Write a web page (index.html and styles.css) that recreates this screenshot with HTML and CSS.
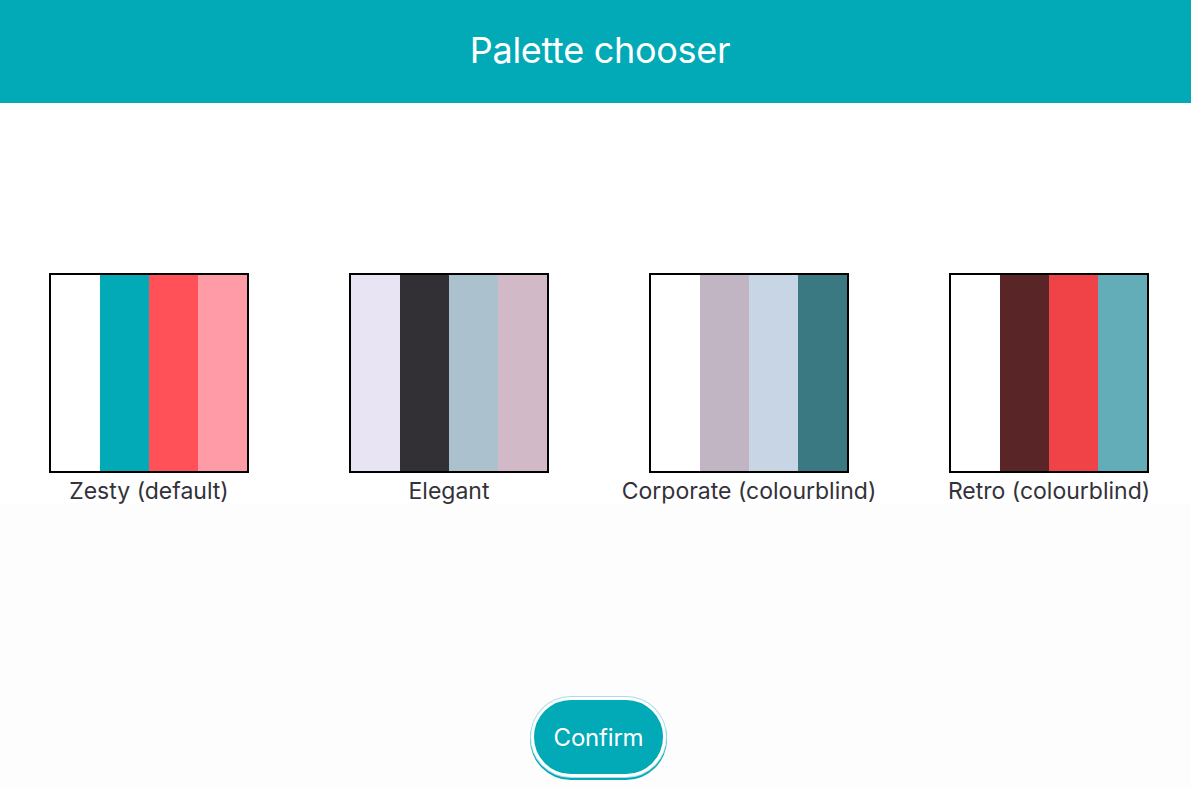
FILE: index.html
```html
<!DOCTYPE html>
<html>
<head>
<meta charset="utf-8">
<link rel="stylesheet" href="styles.css">
</head>
<body>
<header class="topbar"><h1 class="title">Palette chooser</h1></header>
<main class="main">
  <section class="palettes">
    <div class="palette">
      <div class="swatch">
        <span class="stripe" style="background:#ffffff"></span>
        <span class="stripe" style="background:#02a9b6"></span>
        <span class="stripe" style="background:#ff5157"></span>
        <span class="stripe" style="background:#ff9ba6"></span>
      </div>
      <div class="label">Zesty (default)</div>
    </div>
    <div class="palette">
      <div class="swatch">
        <span class="stripe" style="background:#e8e4f4"></span>
        <span class="stripe" style="background:#333035"></span>
        <span class="stripe" style="background:#abc1cd"></span>
        <span class="stripe" style="background:#d1b9c8"></span>
      </div>
      <div class="label">Elegant</div>
    </div>
    <div class="palette">
      <div class="swatch">
        <span class="stripe" style="background:#ffffff"></span>
        <span class="stripe" style="background:#c2b5c3"></span>
        <span class="stripe" style="background:#c8d5e5"></span>
        <span class="stripe" style="background:#3a7982"></span>
      </div>
      <div class="label">Corporate (colourblind)</div>
    </div>
    <div class="palette">
      <div class="swatch">
        <span class="stripe" style="background:#ffffff"></span>
        <span class="stripe" style="background:#5a2526"></span>
        <span class="stripe" style="background:#ef4347"></span>
        <span class="stripe" style="background:#63adb9"></span>
      </div>
      <div class="label">Retro (colourblind)</div>
    </div>
  </section>
  <section class="footer">
    <button class="confirm">Confirm</button>
  </section>
</main>
</body>
</html>
```
FILE: styles.css
```css
* { box-sizing: border-box; }
html, body { margin: 0; padding: 0; }
body {
  width: 1191px;
  height: 788px;
  overflow: hidden;
  font-family: Inter, "Noto Sans", sans-serif;
  background: #fdfdfd;
}
.topbar {
  height: 103px;
  background: #02a9b6;
  display: flex;
  align-items: center;
  justify-content: center;
  padding-left: 9px;
}
.title {
  margin: 0;
  color: #ffffff;
  font-weight: 400;
  font-size: 36px;
  letter-spacing: -0.3px;
  padding-bottom: 4px;
}
.main {
  display: flex;
  flex-direction: column;
}
.palettes {
  background: #ffffff;
  padding-top: 170px;
  padding-left: 49px;
  display: flex;
  gap: 100px;
  height: 400px;
  flex-shrink: 0;
}
.palette {
  width: 200px;
  display: flex;
  flex-direction: column;
  align-items: center;
}
.swatch {
  flex-shrink: 0;
  width: 200px;
  height: 200px;
  border: 2px solid #000;
  display: flex;
}
.stripe { flex: 1; }
.label {
  margin-top: 4px;
  white-space: nowrap;
  font-size: 23px;
  line-height: 28px;
  color: #33323a;
}
.footer {
  height: 285px;
  display: flex;
  justify-content: center;
  align-items: flex-start;
  padding-top: 194px;
  padding-left: 6px;
}
.confirm {
  font-family: Inter, "Noto Sans", sans-serif;
  font-size: 24px;
  color: #ffffff;
  background: #02a9b6;
  border: 3px solid #ffffff;
  border-radius: 40px;
  height: 80px;
  padding: 0 20px;
  box-shadow: 0 0 0 1px #a6dde8, 0 2px 0 1px #02a9b6;
  letter-spacing: -0.2px;
}
```
